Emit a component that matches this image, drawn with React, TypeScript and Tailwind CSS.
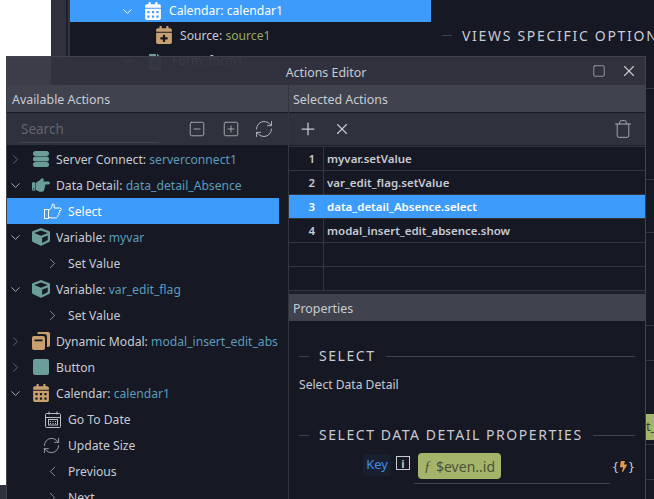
import { ChevronDown, ChevronRight, ChevronLeft, Plus, X, Square, SquareMinus, SquarePlus, RefreshCw, Trash } from "lucide-react";
import { FaHandPointRight, FaCube, FaCalendarAlt, FaCalendarPlus, FaFileAlt, FaBolt } from "react-icons/fa";
import type { ReactNode } from "react";

const TEAL = "#6b9e9a";
const TAN = "#c9a16f";

function DbIcon() {
  return (
    <svg width="16" height="16" viewBox="0 0 16 16" fill={TEAL}>
      <rect x="0" y="0" width="16" height="5" rx="2.500" />
      <rect x="0" y="5.500" width="16" height="5" rx="2.500" />
      <rect x="0" y="11" width="16" height="5" rx="2.500" />
    </svg>
  );
}

function HandOutline() {
  return (
    <svg width="18" height="18" viewBox="0 0 18 18" fill="none" stroke="#fff" strokeWidth="1">
      <rect x="0.500" y="7.500" width="4" height="9" />
      <path d="M4.500 8.500C7 7.500 8 5 8.500 2C10 1.500 10.800 3 10 6H16C17.800 6 17.800 8.700 16 8.700H15C16.300 9.200 16 11.200 14.500 11.200C15.300 12 14.800 13.700 13.500 13.700C14 14.700 13 16 12 16H8C6.500 16 5.500 15.200 4.500 15" />
    </svg>
  );
}

function ModalIcon() {
  return (
    <svg width="18" height="18" viewBox="0 0 18 18">
      <path d="M6 0h10a2 2 0 0 1 2 2v11a2 2 0 0 1-2 2h-1V5a3 3 0 0 0-3-3H5.500A2 2 0 0 1 6 0z" fill={TAN} />
      <rect x="0" y="4" width="13" height="14" rx="2" fill={TAN} />
      <rect x="2.500" y="7.500" width="8" height="1.800" fill="#161824" />
    </svg>
  );
}

function CalendarLine() {
  return (
    <svg width="16" height="17" viewBox="0 0 16 17" fill="none" stroke="#b9bcc4" strokeWidth="1">
      <rect x="0.500" y="2.500" width="15" height="14" rx="1" />
      <path d="M0.500 6.500h15M4 0.500v3M12 0.500v3" />
      <rect x="3.500" y="8.500" width="9" height="5.500" />
      <path d="M5 10.500h1M7.500 10.500h1M10 10.500h1M5 12.500h1M7.500 12.500h1M10 12.500h1" strokeWidth="1.200" />
    </svg>
  );
}

function Row({ open, leaf, indent, icon, label, value, active }: { open?: boolean; leaf?: boolean; indent?: boolean; icon?: ReactNode; label: string; value?: string; active?: boolean }) {
  return (
    <div className={`flex h-[26px] w-[272px] shrink-0 items-center whitespace-nowrap text-[12.150px] ${active ? "bg-[#3d9bfb] text-white" : "text-[#c8cbd2]"}`}>
      {!indent && (
        <span className="flex w-[17px] justify-center">
          {open ? <ChevronDown size={15} strokeWidth={1.300} color="#c8cbd2" /> : <ChevronRight size={15} strokeWidth={1.300} color="#70737c" />}
        </span>
      )}
      {indent && <span className={leaf ? "flex w-[55px] justify-end pr-[1px]" : "flex w-[55px] justify-end"}>{icon}</span>}
      {!indent && <span className="ml-[8px] flex w-[18px] justify-center">{icon}</span>}
      <span className="ml-[6px] pt-[2px]">
        {label}
        {value && <span className="text-[#5a9cba]"> {value}</span>}
      </span>
    </div>
  );
}

function Heading({ text }: { text: string }) {
  return (
    <div className="flex items-center text-[14px] leading-[20px] tracking-[1.550px] text-[#c8cbd2]">
      <span className="h-px w-[10px] bg-[#40424c]" />
      <span className="mx-[10px] whitespace-nowrap">{text}</span>
      <span className="h-px flex-1 bg-[#40424c]" />
    </div>
  );
}

function ActionRow({ n, text, active }: { n?: number; text?: string; active?: boolean }) {
  return (
    <div className={`flex h-[24px] items-center border-b border-[#33353f] text-[11.500px] font-semibold ${active ? "bg-[#3d9bfb] text-white" : "text-[#c8cbd2]"}`}>
      <span className={`flex h-full w-[35px] items-center justify-end border-r pr-[8px] ${active ? "border-[#3d9bfb]" : "border-[#33353f]"}`}>{n}</span>
      <span className="pl-[3px]">{text}</span>
    </div>
  );
}

export default function App() {
  return (
    <div className="relative h-[499px] w-[654px] overflow-hidden bg-white font-['Noto_Sans',sans-serif]">
      {/* page behind the dialog */}
      <div className="ml-[51px] flex h-full bg-[#161824]">
        <div className="w-[15px] bg-[#2f313c]" />
        <div className="w-[2px] bg-[#1d1f2a]" />
        <div className="w-[2px] bg-[#33353f]" />
        <div className="flex min-w-0 flex-1 flex-col">
          <div className="flex h-[22px] w-[361px] items-center bg-[#3d9bfb] pl-[50px] text-[12.150px] text-white">
            <ChevronDown size={15} strokeWidth={1.500} />
            <FaCalendarAlt size={18} className="ml-[9px]" />
            <span className="ml-[7px]">Calendar: calendar1</span>
          </div>
          <div className="flex h-[26px] items-center pl-[85px] text-[12.150px] text-[#c8cbd2]">
            <FaCalendarPlus size={18} color={TAN} className="shrink-0" />
            <span className="ml-[7px] w-[262px] shrink-0 pt-[2px]">Source: <span className="text-[#95a85e]">source1</span></span>
            <span className="h-px w-[10px] shrink-0 bg-[#40424c]" />
            <span className="ml-[10px] whitespace-nowrap text-[14px] tracking-[1.700px] text-[#c8cbd2]">VIEWS SPECIFIC OPTIONS</span>
          </div>
          <div className="flex h-[26px] items-center pl-[50px] pt-px text-[12.150px] text-[#c8cbd2]">
            <ChevronDown size={15} strokeWidth={1.500} />
            <FaFileAlt size={16} color={TEAL} className="ml-[12px]" />
            <span className="ml-[9px]">Form: form1</span>
          </div>
        </div>
      </div>

      {/* right edge lines seen beside the dialog */}
      <div className="absolute left-[646px] top-[88px] h-px w-[8px] bg-[#33353f]" />
      <div className="absolute left-[646px] top-[179px] h-px w-[8px] bg-[#33353f]" />
      <div className="absolute left-[646px] top-[232px] h-px w-[8px] bg-[#33353f]" />
      <div className="absolute left-[646px] top-[325px] h-px w-[8px] bg-[#33353f]" />
      <div className="absolute left-[646px] top-[360px] h-px w-[8px] bg-[#33353f]" />
      <div className="absolute left-[646px] top-[414px] flex h-[26px] w-[8px] items-center overflow-hidden bg-[#a4b46a] text-[13px] text-[#3a4030]">t_</div>
      <div className="absolute left-[646px] top-[444px] h-px w-[8px] bg-[#33353f]" />
      <div className="absolute left-[646px] top-[479px] h-px w-[8px] bg-[#33353f]" />
      <div className="absolute left-0 top-[485px] h-[14px] w-[6px] bg-[#2f313c]" />

      {/* dialog */}
      <div className="absolute left-[6px] top-[56px] flex h-[443px] w-[640px] flex-col border-x border-t border-[#40424c]">
        <div className="relative flex h-[28px] shrink-0 items-center justify-center bg-[#31333e]/95 pt-[4px] text-[12.400px] text-[#c8cbd2]">
          Actions Editor
          <Square size={14} strokeWidth={1.200} className="absolute left-[585px] top-[7px] text-[#b9bcc4]" />
          <X size={18} strokeWidth={1.500} className="absolute left-[613px] top-[5px] text-[#c8cbd2]" />
        </div>
        <div className="flex min-h-0 flex-1 bg-[#161824]">
          {/* left */}
          <div className="flex w-[282px] shrink-0 flex-col overflow-hidden border-r border-[#33353f]">
            <div className="flex h-[28px] shrink-0 items-center border-b border-[#161824] bg-[#40424d] pl-[5px] pt-[3px] text-[12.400px] text-[#c8cbd2]">Available Actions</div>
            <div className="flex h-[32px] shrink-0 items-center bg-[#2f313c]">
              <div className="ml-[12px] h-[28px] w-[140px] border-b border-[#40424c] pl-[2px] pt-[4px] text-[13.500px] text-[#62656e]">Search</div>
              <SquareMinus size={18} strokeWidth={1.100} className="ml-[29px] text-[#b9bcc4]" />
              <SquarePlus size={18} strokeWidth={1.100} className="ml-[16px] text-[#b9bcc4]" />
              <RefreshCw size={20} strokeWidth={1.100} className="ml-[14px] text-[#b9bcc4]" />
            </div>
            <div className="flex flex-col pt-px">
              <Row icon={<DbIcon />} label="Server Connect:" value="serverconnect1" />
              <Row open icon={<FaHandPointRight size={18} color={TEAL} />} label="Data Detail:" value="data_detail_Absence" />
              <Row indent active icon={<HandOutline />} label="Select" />
              <Row open icon={<FaCube size={18} color={TEAL} />} label="Variable:" value="myvar" />
              <Row indent leaf icon={<ChevronRight size={17} strokeWidth={1} color="#b9bcc4" />} label="Set Value" />
              <Row open icon={<FaCube size={18} color={TEAL} />} label="Variable:" value="var_edit_flag" />
              <Row indent leaf icon={<ChevronRight size={17} strokeWidth={1} color="#b9bcc4" />} label="Set Value" />
              <Row icon={<ModalIcon />} label="Dynamic Modal:" value="modal_insert_edit_abs" />
              <Row icon={<span className="block h-[16px] w-[16px] rounded-[2px] bg-[#6b9e9a]" />} label="Button" />
              <Row open icon={<FaCalendarAlt size={18} color={TAN} />} label="Calendar:" value="calendar1" />
              <Row indent leaf icon={<CalendarLine />} label="Go To Date" />
              <Row indent leaf icon={<RefreshCw size={19} strokeWidth={1} color="#b9bcc4" />} label="Update Size" />
              <Row indent leaf icon={<ChevronLeft size={17} strokeWidth={1} color="#b9bcc4" />} label="Previous" />
              <Row indent leaf icon={<ChevronRight size={17} strokeWidth={1} color="#b9bcc4" />} label="Next" />
            </div>
          </div>

          {/* right */}
          <div className="flex min-w-0 flex-1 flex-col">
            <div className="flex h-[28px] shrink-0 items-center border-b border-[#161824] bg-[#40424d] pl-[4px] pt-[3px] text-[12.400px] text-[#c8cbd2]">Selected Actions</div>
            <div className="flex h-[33px] shrink-0 items-center border-b border-[#1d1f2a] bg-[#2f313c] pl-[9px] text-[#c8cbd2]">
              <Plus size={20} strokeWidth={1.500} />
              <X size={18} strokeWidth={1.500} className="ml-[15px]" />
              <Trash size={20} strokeWidth={1} className="ml-auto mr-[12px] text-[#b9bcc4]" />
            </div>
            <div className="flex flex-col border-t border-[#33353f]">
              <ActionRow n={1} text="myvar.setValue" />
              <ActionRow n={2} text="var_edit_flag.setValue" />
              <ActionRow n={3} text="data_detail_Absence.select" active />
              <ActionRow n={4} text="modal_insert_edit_absence.show" />
              <ActionRow />
              <ActionRow />
            </div>
            <div className="h-[3px] shrink-0 bg-[#1d1f2a]" />
            <div className="flex h-[27px] shrink-0 items-center bg-[#40424d] pl-[4px] pt-[3px] text-[12.400px] text-[#c8cbd2]">Properties</div>
            <div className="flex flex-col px-[10px] pt-[25px]">
              <Heading text="SELECT" />
              <p className="mt-[9px] text-[12.100px] leading-[20px] text-[#c8cbd2]">Select Data Detail</p>
              <div className="mt-[30px]"><Heading text="SELECT DATA DETAIL PROPERTIES" /></div>
              <div className="relative mt-[8px] flex h-[31px] items-start">
                <span className="ml-[64px] mt-px flex h-[22px] w-[28px] items-center justify-center rounded-[3px] bg-[#18202f] text-[13px] text-[#3b8cf0]">Key</span>
                <span className="ml-[5px] mt-[3px] flex h-[14px] w-[14px] items-center justify-center border border-[#c8cbd2] text-[11px] font-bold leading-none text-[#c8cbd2]">i</span>
                <span className="ml-[8px] flex h-[26px] w-[83px] items-center rounded-[4px] bg-[#a4b46a] pl-[6px] text-[14px] text-[#4b5235]"><i className="mr-[5px] font-['Liberation_Serif',serif]">ƒ</i>$even..id</span>
                <span className="absolute left-[115px] top-[30px] h-px w-[196px] bg-[#40424c]" />
                <span className="ml-auto mr-px mt-[4px] flex items-center text-[13px] text-[#c8cbd2]">{"{"}<FaBolt size={11} color="#e59a4c" />{"}"}</span>
              </div>
            </div>
          </div>
        </div>
      </div>
    </div>
  );
}
